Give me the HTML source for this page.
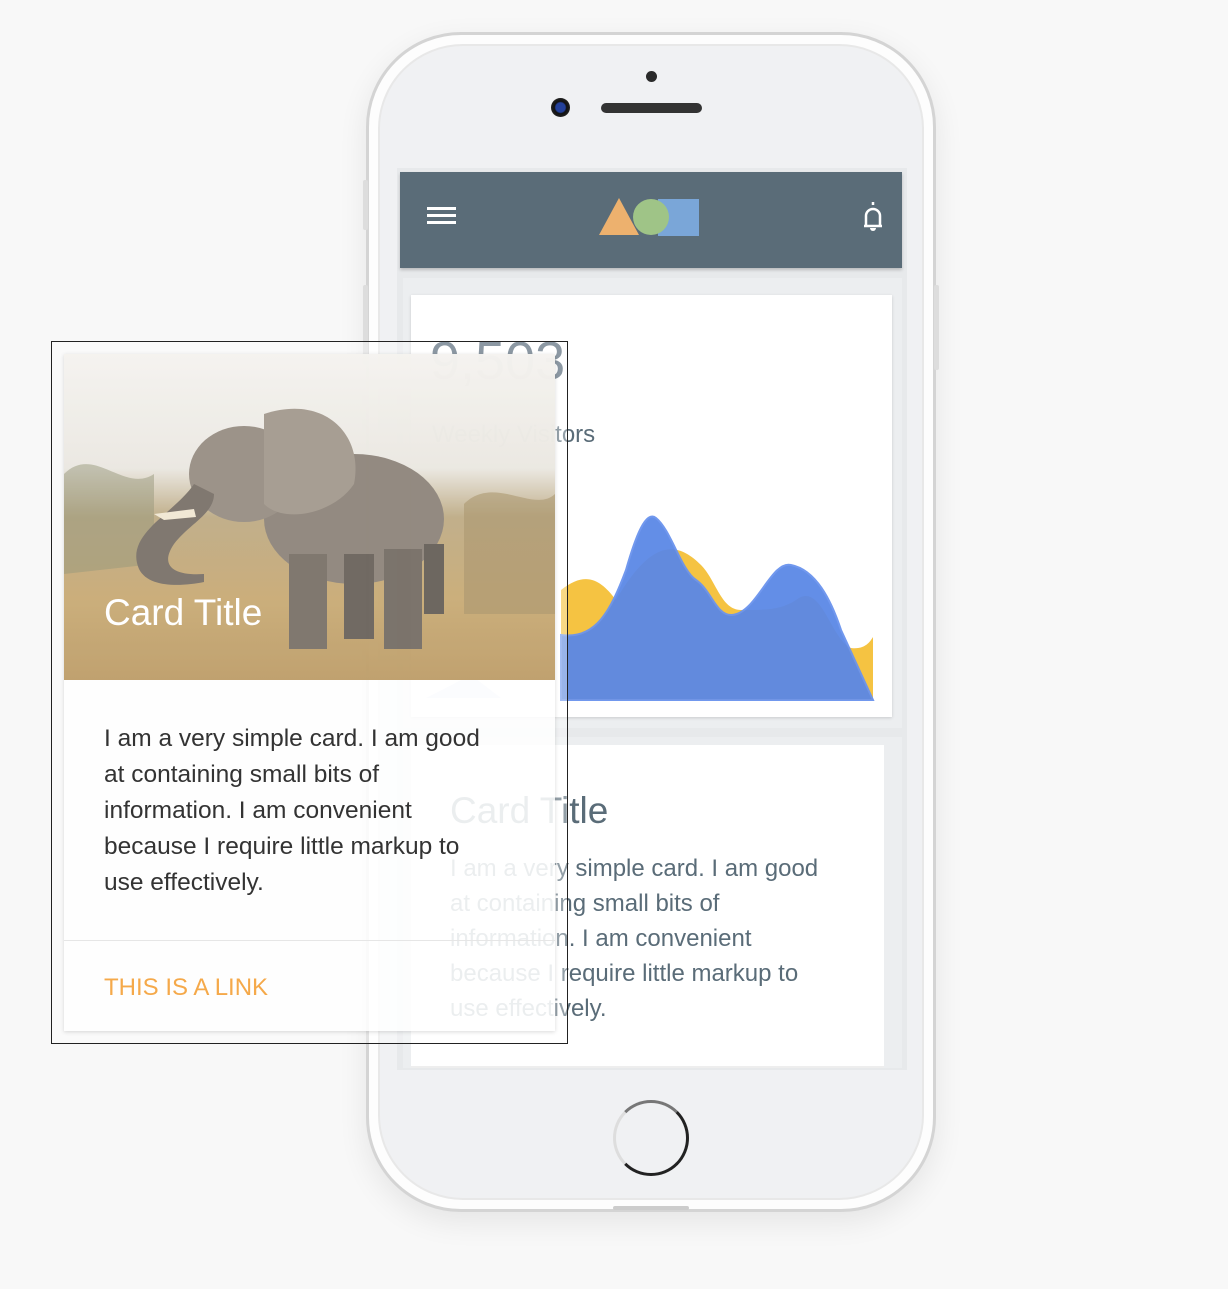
<!DOCTYPE html>
<html><head><meta charset="utf-8"><style>
*{margin:0;padding:0;box-sizing:border-box}
body{width:1228px;height:1289px;background:#f8f8f8;position:relative;overflow:hidden;font-family:"Liberation Sans",sans-serif}
.abs{position:absolute}
</style></head><body>
<!-- phone -->
<div class="abs" style="left:366px;top:32px;width:570px;height:1180px;border-radius:95px;background:#fdfdfd;border:3px solid #d4d4d4;box-shadow:0 10px 30px rgba(0,0,0,.08)"></div>
<div class="abs" style="left:378px;top:44px;width:546px;height:1156px;border-radius:85px;background:#f0f1f3;border:2px solid #e8e8e8"></div>
<div class="abs" style="left:363px;top:180px;width:5px;height:50px;background:#ddd;border-radius:2px"></div>
<div class="abs" style="left:363px;top:285px;width:5px;height:80px;background:#ddd;border-radius:2px"></div>
<div class="abs" style="left:934px;top:285px;width:5px;height:85px;background:#ddd;border-radius:2px"></div>
<div class="abs" style="left:646px;top:71px;width:11px;height:11px;border-radius:50%;background:#2a2a2a"></div>
<div class="abs" style="left:551px;top:98px;width:19px;height:19px;border-radius:50%;background:radial-gradient(circle,#23409a 0 35%,#111 45%,#333 100%)"></div>
<div class="abs" style="left:601px;top:103px;width:101px;height:10px;border-radius:5px;background:#333"></div>
<!-- screen -->
<div class="abs" style="left:397px;top:168px;width:510px;height:902px;background:#e7e9eb"></div>
<div class="abs" style="left:400px;top:172px;width:502px;height:96px;background:#5a6c78;box-shadow:0 2px 3px rgba(0,0,0,.2)"></div>
<div class="abs" style="left:427px;top:207px;width:29px;height:3px;background:#fff;box-shadow:0 7px 0 #fff,0 14px 0 #fff"></div>
<svg class="abs" style="left:595px;top:192px" width="106" height="46">
<polygon points="4,43 24,6 44,43" fill="#edb16e"/><rect x="63" y="7" width="41" height="37" fill="#7aa6d8"/><circle cx="56" cy="25" r="18" fill="#9fc487"/></svg>
<svg class="abs" style="left:856px;top:200px" width="34" height="34" viewBox="0 0 34 34"><path d="M17 2v3M8 26h18M10 26v-10a7 7 0 0 1 14 0v10" fill="none" stroke="#fff" stroke-width="2.5" stroke-linejoin="round"/><path d="M14 28h6a3 3 0 0 1-6 0z" fill="#fff"/></svg>
<div class="abs" style="left:403px;top:278px;width:499px;height:450px;background:#eceef0"></div>
<div class="abs" style="left:411px;top:295px;width:481px;height:422px;background:#fff;box-shadow:0 1px 3px rgba(0,0,0,.15)"></div>
<div class="abs" style="left:430px;top:330px;font-size:54px;color:#4f6272">9,503</div>
<div class="abs" style="left:432px;top:421px;font-size:24px;color:#5a6c78">Weekly Visitors</div>
<svg class="abs" style="left:411px;top:500px" width="481" height="210">
<path d="M150 90 C175 70 190 80 205 100 C240 40 265 40 290 65 C305 80 310 110 330 110 C355 110 370 110 385 100 C410 80 420 140 440 148 C455 150 460 140 462 137 L462 200 L150 200 Z" fill="#f5c342"/>
<path d="M150 135 C185 140 200 110 215 70 C225 35 235 10 245 18 C260 30 270 70 285 80 C300 90 305 115 320 115 C345 115 360 60 380 65 C405 70 420 100 430 130 L462 200 L150 200 Z" fill="#5b88e6" stroke="#6a93ee" stroke-width="2" opacity=".95"/>
<path d="M15 198 L90 198 L60 175 Z" fill="#dce4f8"/></svg>
<div class="abs" style="left:403px;top:737px;width:499px;height:331px;background:#eceef0"></div>
<div class="abs" style="left:411px;top:745px;width:473px;height:323px;background:#fff;border-bottom:2px solid #eee"></div>
<div class="abs" style="left:450px;top:790px;font-size:37px;color:#5a6c78">Card Title</div>
<div class="abs" style="left:450px;top:851px;font-size:24px;line-height:35px;color:#5a6c78;width:385px">I am a very simple card. I am good at containing small bits of information. I am convenient because I require little markup to use effectively.</div>
<div class="abs" style="left:613px;top:1100px;width:76px;height:76px;border-radius:50%;border:3px solid #444;border-color:#777 #222 #222 #ddd"></div>
<div class="abs" style="left:613px;top:1206px;width:76px;height:4px;background:#ccc;border-radius:2px"></div>
<!-- overlay -->
<div class="abs" style="left:51px;top:341px;width:517px;height:703px;border:1.5px solid #222;background:rgba(255,255,255,.35)"></div>
<div class="abs" style="left:64px;top:354px;width:491px;height:677px;background:rgba(255,255,255,.82);box-shadow:0 1px 4px rgba(0,0,0,.15);overflow:hidden">
<svg width="491" height="326" style="display:block;opacity:.88">
<defs><linearGradient id="g" x1="0" y1="0" x2="0" y2="1"><stop offset="0" stop-color="#f4f2ee"/><stop offset=".35" stop-color="#e9e6df"/><stop offset=".5" stop-color="#b9a57c"/><stop offset=".75" stop-color="#c4a46a"/><stop offset="1" stop-color="#b8955c"/></linearGradient></defs>
<rect width="491" height="326" fill="url(#g)"/>
<path d="M0 120 C30 90 60 140 90 120 L90 210 L0 220Z" fill="#8a8a6a" opacity=".5"/>
<path d="M400 150 C430 120 470 160 491 140 L491 260 L400 260Z" fill="#a08a5e" opacity=".6"/>
<ellipse cx="290" cy="165" rx="90" ry="65" fill="#857b70"/>
<ellipse cx="180" cy="120" rx="55" ry="48" fill="#8f857a"/>
<path d="M200 60 C260 40 300 80 290 130 C270 160 220 170 200 150Z" fill="#9c9185"/>
<path d="M130 130 C110 160 60 180 75 215 C85 235 120 232 140 228 L140 220 C110 222 95 212 110 190 C125 170 150 160 150 140Z" fill="#6f665d"/>
<path d="M90 160 L130 155 L132 163 L100 166Z" fill="#f0e6d0"/>
<rect x="225" y="200" width="38" height="95" fill="#6f665c"/>
<rect x="280" y="200" width="30" height="85" fill="#5e564e"/>
<rect x="320" y="195" width="38" height="100" fill="#6a6158"/>
<rect x="360" y="190" width="20" height="70" fill="#5a534b"/>
</svg>
<div class="abs" style="left:40px;top:238px;font-size:37px;color:#fff">Card Title</div>
<div class="abs" style="left:40px;top:367px;font-size:24.5px;line-height:36px;color:#333;width:395px">I am a very simple card. I am good at containing small bits of information. I am convenient because I require little markup to use effectively.</div>
<div class="abs" style="left:0;top:586px;width:491px;height:1px;background:#e6e6e6"></div>
<div class="abs" style="left:40px;top:620px;font-size:24px;color:#f5a94a">THIS IS A LINK</div>
</div>
</body></html>
